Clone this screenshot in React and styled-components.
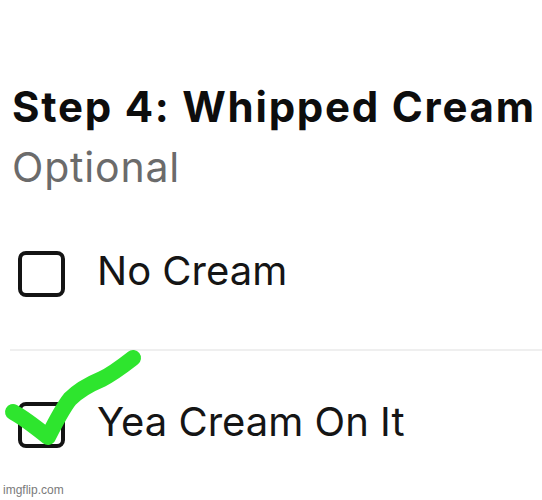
import React from 'react'
import styled, { createGlobalStyle } from 'styled-components'

const GlobalStyle = createGlobalStyle`
  *, *::before, *::after {
    box-sizing: border-box;
  }
  html, body {
    margin: 0;
    background: #fff;
  }
  body {
    font-family: 'Inter', 'Liberation Sans', sans-serif;
    color: #111;
  }
`

const options = [
  { id: 'none', label: 'No Cream', checked: false },
  { id: 'yea', label: 'Yea Cream On It', checked: true },
]

const App = () => (
  <Page>
    <GlobalStyle />
    <Section>
      <Title>Step 4: Whipped Cream</Title>
      <Subtitle>Optional</Subtitle>
      <OptionList>
        {options.map((opt, i) => (
          <Option key={opt.id} divided={i > 0}>
            <Box />
            <Label>{opt.label}</Label>
            {opt.checked && <Scribble />}
          </Option>
        ))}
      </OptionList>
    </Section>
    <Watermark>imgflip.com</Watermark>
  </Page>
)

// hand-drawn green tick over the second box
const Scribble = () => (
  <Check viewBox="0 0 130 100" width="130" height="100">
    <path
      d="M3 61 C14 67 28 78 38 86 C45 72 52 58 60 48 C70 38 80 33 92 28 C104 22 114 14 123 7"
      fill="none"
      stroke="#2ee52e"
      strokeWidth="16"
      strokeLinecap="round"
      strokeLinejoin="round"
    />
  </Check>
)

export default App

const Page = styled.div`
  position: relative;
  width: 542px;
  height: 500px;
  overflow: hidden;
`

const Section = styled.div`
  padding: 83px 0 0 10px;
`

const Title = styled.h1`
  margin: 0 0 0 2px;
  font-size: 42px;
  font-weight: 700;
  line-height: 48px;
  letter-spacing: 1.75px;
  color: #0d0d0d;
  white-space: nowrap;
`

const Subtitle = styled.div`
  margin: 14px 0 0 2px;
  font-size: 41px;
  line-height: 44px;
  letter-spacing: 0.8px;
  color: #6b6b6b;
`

const OptionList = styled.div`
  margin-top: 10px;
`

const Option = styled.div`
  position: relative;
  display: flex;
  align-items: center;
  gap: 32px;
  height: 150px;
  padding-left: 8px;
  border-top: ${p => (p.divided ? '2px solid #efefef' : 'none')};
`

const Box = styled.div`
  width: 47px;
  height: 46px;
  border: 4px solid #141414;
  border-radius: 8px;
  flex-shrink: 0;
`

const Label = styled.span`
  margin-bottom: 8px;
  font-size: 40px;
  color: #151515;
`

const Check = styled.svg`
  position: absolute;
  left: 0;
  top: 0;
  overflow: visible;
`

const Watermark = styled.div`
  position: absolute;
  left: 3px;
  bottom: 3px;
  font-family: 'Liberation Sans', sans-serif;
  font-size: 12px;
  color: #7a7a7a;
`
